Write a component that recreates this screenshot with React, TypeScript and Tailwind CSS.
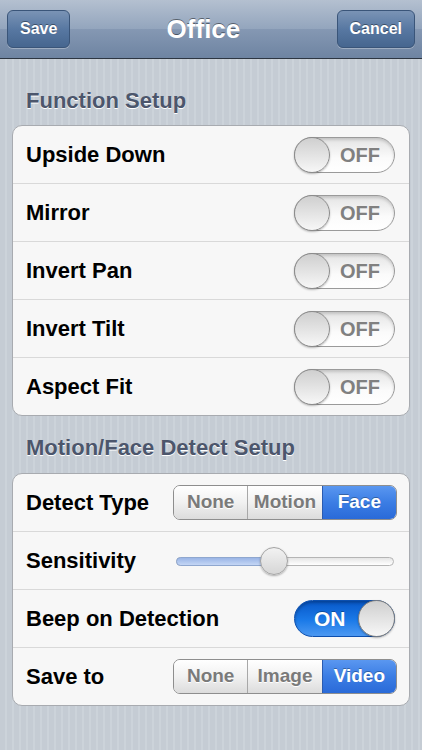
const font = { fontFamily: '"Liberation Sans", Arial, sans-serif' }

function OffSwitch() {
  return (
    <div className="relative h-[36px] w-[101px] rounded-full border border-[#9a9a9a] bg-[linear-gradient(#e4e4e4,#fbfbfb_60%,#ffffff)] shadow-[inset_0_2px_3px_rgba(0,0,0,0.15)]">
      <div className="absolute left-[-1px] top-[-1px] h-[36px] w-[36px] rounded-full border border-[#8c8c8c] bg-[linear-gradient(#cfcfcf,#f7f7f7)] shadow-[0_1px_2px_rgba(0,0,0,0.25)]" />
      <span className="absolute right-[14px] top-0 text-[20px] font-bold leading-[34px] text-[#808080]">OFF</span>
    </div>
  )
}

function OnSwitch() {
  return (
    <div className="relative h-[37px] w-[101px] rounded-full border border-[#0c4fae] bg-[linear-gradient(#0757c8,#1b7ae8_55%,#4c99f2)] shadow-[inset_0_2px_3px_rgba(0,0,0,0.25)]">
      <span className="absolute left-[19px] top-0 text-[21px] font-bold leading-[35px] text-white [text-shadow:0_-1px_0_rgba(0,0,0,0.3)]">ON</span>
      <div className="absolute right-[-1px] top-[-1px] h-[37px] w-[37px] rounded-full border border-[#7f7f7f] bg-[linear-gradient(#cfcfcf,#f7f7f7)] shadow-[0_1px_2px_rgba(0,0,0,0.3)]" />
    </div>
  )
}

function Segmented({ items, active }: { items: string[]; active: number }) {
  return (
    <div className="flex h-[35px] w-[224px] overflow-hidden rounded-[7px] border border-[#8e8e8e]">
      {items.map((it, i) => (
        <div
          key={it}
          className={
            i === active
              ? "flex flex-1 items-center justify-center border-l border-[#2a5bb0] bg-[linear-gradient(#5a97f0,#3b7de4_50%,#2a6ad8)] text-[19px] font-bold text-white [text-shadow:0_-1px_0_rgba(0,0,0,0.3)]"
              : i === 0
              ? "flex flex-1 items-center justify-center bg-[linear-gradient(#ffffff,#f1f1f1_50%,#dcdcdc)] text-[19px] font-bold text-[#7a7a7a] [text-shadow:0_1px_0_#fff]"
              : "flex flex-1 items-center justify-center border-l border-[#a8a8a8] bg-[linear-gradient(#ffffff,#f1f1f1_50%,#dcdcdc)] text-[19px] font-bold text-[#7a7a7a] [text-shadow:0_1px_0_#fff]"
          }
        >
          {it}
        </div>
      ))}
    </div>
  )
}

function Slider() {
  return (
    <div className="relative h-[30px] w-[218px]">
      <div className="absolute left-0 right-0 top-[11px] h-[9px] rounded-full border border-[#b5b5b5] bg-[linear-gradient(#e6e6e6,#ffffff)]" />
      <div className="absolute left-0 top-[11px] h-[9px] w-[100px] rounded-l-full border border-[#8fa7cf] bg-[linear-gradient(#9ab5e6,#c4d6f5)]" />
      <div className="absolute left-[84px] top-[1px] h-[28px] w-[28px] rounded-full border border-[#a3a3a3] bg-[linear-gradient(#f2f2f2,#d6d6d6)] shadow-[0_1px_2px_rgba(0,0,0,0.3)]" />
    </div>
  )
}

function Row({ label, children, first }: { label: string; children: React.ReactNode; first?: boolean }) {
  return (
    <div
      className={
        first
          ? "flex h-[57px] items-center justify-between pl-[13px] pr-[14px]"
          : "flex h-[58px] items-center justify-between border-t border-[#d9d9d9] pl-[13px] pr-[14px]"
      }
    >
      <span className="text-[22px] font-bold text-black">{label}</span>
      {children}
    </div>
  )
}

function NavButton({ label }: { label: string }) {
  return (
    <div className="flex h-[38px] items-center rounded-[6px] border border-[#3a5579] bg-[linear-gradient(#7a93b5,#5878a2_50%,#46668f)] px-[12px] text-[16px] font-bold text-white shadow-[0_1px_0_rgba(255,255,255,0.3)] [text-shadow:0_-1px_0_rgba(0,0,0,0.4)]">
      {label}
    </div>
  )
}

export default function App() {
  return (
    <div
      style={font}
      className="h-[750px] w-[422px] overflow-hidden bg-[repeating-linear-gradient(90deg,#c5ccd4_0px,#c5ccd4_5px,#ccd3da_5px,#ccd3da_7px)]"
    >
      <div className="flex h-[59px] items-center justify-between border-b border-[#2d3642] bg-[linear-gradient(#b4c0d0,#93a5bd_50%,#8598b3_50%,#6e84a2)] px-[7px]">
        <NavButton label="Save" />
        <span className="text-[26px] font-bold text-white [text-shadow:0_-1px_0_rgba(0,0,0,0.45)]">Office</span>
        <NavButton label="Cancel" />
      </div>

      <div className="px-[12px]">
        <div className="pl-[14px] pt-[29px] pb-[12px] text-[22px] font-bold leading-[25px] text-[#4c566c] [text-shadow:0_1px_0_#fff]">
          Function Setup
        </div>
        <div className="rounded-[10px] border border-[#a8abb0] bg-[#f7f7f7]">
          <Row label="Upside Down" first>
            <OffSwitch />
          </Row>
          <Row label="Mirror">
            <OffSwitch />
          </Row>
          <Row label="Invert Pan">
            <OffSwitch />
          </Row>
          <Row label="Invert Tilt">
            <OffSwitch />
          </Row>
          <Row label="Aspect Fit">
            <OffSwitch />
          </Row>
        </div>

        <div className="pl-[14px] pt-[19px] pb-[13px] text-[22px] font-bold leading-[25px] text-[#4c566c] [text-shadow:0_1px_0_#fff]">
          Motion/Face Detect Setup
        </div>
        <div className="rounded-[10px] border border-[#a8abb0] bg-[#f7f7f7]">
          <div className="flex h-[57px] items-center justify-between pl-[13px] pr-[12px]">
            <span className="text-[22px] font-bold text-black">Detect Type</span>
            <Segmented items={["None", "Motion", "Face"]} active={2} />
          </div>
          <div className="flex h-[58px] items-center justify-between border-t border-[#d9d9d9] pl-[13px] pr-[15px]">
            <span className="text-[22px] font-bold text-black">Sensitivity</span>
            <Slider />
          </div>
          <Row label="Beep on Detection">
            <OnSwitch />
          </Row>
          <div className="flex h-[58px] items-center justify-between border-t border-[#d9d9d9] pl-[13px] pr-[12px]">
            <span className="text-[22px] font-bold text-black">Save to</span>
            <Segmented items={["None", "Image", "Video"]} active={2} />
          </div>
        </div>
      </div>
    </div>
  )
}
